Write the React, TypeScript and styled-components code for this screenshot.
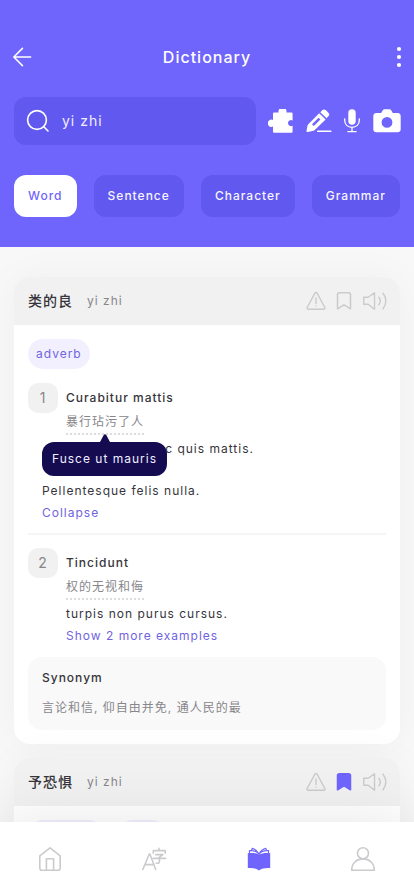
import React from "react";
import styled, { createGlobalStyle } from "styled-components";

const GlobalStyle = createGlobalStyle`
  *, *::before, *::after { box-sizing: border-box; }
  body {
    margin: 0;
    background: #f8f8f8;
    color: #36353b;
    font-family: Inter, "Noto Sans CJK SC", sans-serif;
    font-size: 12px;
    line-height: 22px;
    letter-spacing: 1px;
  }
  button, input { font: inherit; letter-spacing: inherit; color: inherit; }
  button { border: 0; padding: 0; margin: 0; background: none; cursor: pointer; }
  h1, h2, h3, p, ol { margin: 0; padding: 0; }
`;

const Screen = styled.div`
  display: flex;
  flex-direction: column;
  height: 100vh;
  overflow: hidden;
`;

const Header = styled.header`
  flex: none;
  display: flex;
  flex-direction: column;
  padding: 40px 14px 30px;
  background: #6f64fc;
  color: #fff;
`;

const TitleBar = styled.div`
  display: grid;
  grid-template-columns: 20px 1fr 20px;
  align-items: center;
  height: 34px;
  margin: 0 -2px 23px;
`;

const Title = styled.h1`
  text-align: center;
  font-size: 16px;
  font-weight: 500;
`;

const IconButton = styled.button<{ $color?: string; $align?: string }>`
  display: flex;
  justify-content: ${(p) => p.$align ?? "center"};
  color: ${(p) => p.$color ?? "inherit"};
  svg { display: block; }
`;

const SearchRow = styled.div`
  display: flex;
  align-items: center;
  gap: 12px;
  margin-bottom: 30px;
`;

const SearchField = styled.label`
  flex: 1;
  min-width: 0;
  display: flex;
  align-items: center;
  gap: 12px;
  height: 48px;
  padding: 0 12px;
  border-radius: 12px;
  background: #6158f0;
  svg { flex: none; }
`;

const SearchInput = styled.input`
  flex: 1;
  min-width: 0;
  border: 0;
  padding: 0;
  outline: none;
  background: transparent;
  font-size: 14px;
  color: #f1efff;
`;

const Tools = styled.div`
  display: flex;
  align-items: center;
  justify-content: space-between;
  width: 133px;
  margin-right: -1px;
`;

const Tabs = styled.div`
  display: flex;
  justify-content: space-between;
`;

const Tab = styled.button<{ $active?: boolean }>`
  height: 42px;
  padding: 0 14px;
  border-radius: 12px;
  font-weight: 500;
  white-space: nowrap;
  background: ${(p) => (p.$active ? "#fff" : "#6158f0")};
  color: ${(p) => (p.$active ? "#6f64fc" : "#f6f5ff")};
`;

const Results = styled.main`
  flex: 1;
  min-height: 0;
  overflow-y: auto;
  scrollbar-width: none;
  display: flex;
  flex-direction: column;
  gap: 14px;
  padding: 30px 14px 14px;
`;

const Card = styled.article`
  flex: none;
  border-radius: 16px;
  background: #fff;
  box-shadow: 0 0 40px rgba(0, 0, 0, 0.04);
`;

const CardHeader = styled.header`
  display: flex;
  align-items: center;
  gap: 14px;
  height: 48px;
  padding: 0 12px 0 14px;
  border-radius: 16px 16px 0 0;
  background: #f1f1f1;
`;

const Headword = styled.h2`
  font-size: 14px;
  font-weight: 500;
`;

const Pinyin = styled.span`
  flex: 1;
  color: #87868b;
`;

const CardActions = styled.div`
  display: flex;
  align-items: center;
  gap: 10px;
`;

const CardBody = styled.div`
  padding: 14px;
`;

const Tags = styled.div`
  display: flex;
  gap: 14px;
  margin-bottom: 14px;
`;

const Tag = styled.span`
  padding: 4px 8px;
  border-radius: 15px;
  background: #f2f0ff;
  color: #6f64e0;
`;

const Senses = styled.ol`
  list-style: none;
`;

const Sense = styled.li`
  display: grid;
  grid-template-columns: 30px 1fr;
  column-gap: 8px;
  & + & {
    margin-top: 9px;
    padding-top: 13px;
    border-top: 2px solid #f5f5f5;
  }
`;

const SenseNumber = styled.span`
  height: 30px;
  border-radius: 10px;
  background: #f1f1f1;
  color: #87868b;
  font-size: 14px;
  line-height: 30px;
  text-align: center;
`;

const SenseText = styled.div`
  display: flex;
  flex-direction: column;
  align-items: flex-start;
  padding-top: 4px;
`;

const SubHeading = styled.h3`
  font-size: 12px;
  font-weight: 500;
`;

const Glossed = styled.span`
  position: relative;
  margin-top: 4px;
  height: 22px;
  line-height: 18px;
  color: #87868b;
  margin-bottom: 3px;
  background: repeating-linear-gradient(90deg, #dcdcde 0 2px, transparent 2px 4px) bottom / 100% 2px no-repeat;
`;

const Tooltip = styled.span`
  position: absolute;
  z-index: 1;
  top: calc(100% + 7px);
  left: -24px;
  padding: 6px 10px;
  border-radius: 12px;
  background: #140b50;
  color: #f1efff;
  line-height: 22px;
  white-space: nowrap;
  svg {
    position: absolute;
    bottom: 100%;
    left: 50%;
    margin-left: -5px;
  }
`;

const Examples = styled.div<{ $wide?: boolean }>`
  grid-column: ${(p) => (p.$wide ? "1 / -1" : "2")};
  padding-left: ${(p) => (p.$wide ? "14px" : "0")};
`;

const Example = styled.p<{ $indent?: boolean }>`
  line-height: 21px;
  padding-left: ${(p) => (p.$indent ? "24px" : "0")};
  & + & { margin-top: 21px; }
`;

const LinkButton = styled.button`
  display: block;
  margin-top: 1px;
  color: #6f64e0;
`;

const Synonyms = styled.section`
  margin-top: 10px;
  padding: 10px 14px 11px;
  border-radius: 14px;
  background: #f9f9f9;
  p { margin-top: 8px; color: #87868b; }
`;

const BottomNav = styled.nav`
  position: relative;
  z-index: 2;
  flex: none;
  display: flex;
  justify-content: space-between;
  align-items: center;
  height: 74px;
  padding: 0 38px 0 37px;
  background: #fff;
  box-shadow: 0 0 60px rgba(0, 0, 0, 0.1);
`;

const stroke = {
  fill: "none",
  stroke: "currentColor",
  strokeLinecap: "round" as const,
  strokeLinejoin: "round" as const,
};

const BackIcon = () => (
  <svg width="22" height="22" viewBox="0 0 22 22" {...stroke} strokeWidth="1.7">
    <path d="M20.500 11H2M11.500 1.500L2 11L11.500 20.500" />
  </svg>
);

const MoreIcon = () => (
  <svg width="6" height="22" viewBox="0 0 6 22" fill="currentColor">
    <circle cx="3" cy="3" r="2.1" />
    <circle cx="3" cy="11" r="2.1" />
    <circle cx="3" cy="19" r="2.1" />
  </svg>
);

const SearchIcon = () => (
  <svg width="24" height="24" viewBox="0 0 24 24" {...stroke} strokeWidth="1.6">
    <circle cx="11" cy="11" r="9.4" />
    <path d="M17.8 17.8L22 22" />
  </svg>
);

const PuzzleIcon = () => (
  <svg width="26" height="24" viewBox="0 0 26 24" fill="currentColor">
    <path d="M6.300 3.500H10.600A4.050 4.050 0 1 1 18.400 3.500H23.300C24.100 3.500 24.600 4 24.600 4.800V11.400A3.100 3.100 0 1 0 24.600 16.800V22.400C24.600 23.200 24.100 23.700 23.300 23.700H6.300C5.500 23.700 5 23.200 5 22.400V17.600A3.650 3.650 0 1 1 5 11V4.800C5 4 5.500 3.500 6.300 3.500Z" />
  </svg>
);

const PencilIcon = () => (
  <svg width="26" height="24" viewBox="0 0 26 24" fill="currentColor">
    <path fillRule="evenodd" d="M13.200 4.300L19.600 10.400 8.500 21.200c-.6.5-1.200.8-2 .9L1.800 23c-.9.1-1.500-.4-1.300-1.300l.9-4.600c.2-.8.5-1.400 1.100-2zM12.600 8.700L6 15.300l1.800 1.700 6.600-6.500z" />
    <path d="M14.300 3.200L16.500 1.100c1-.9 2.200-.9 3.200 0l2.900 2.800c.9 1 .9 2.100 0 3.100l-2 2.200z" />
    <rect x="11" y="21.600" width="14.500" height="1.500" rx=".7" />
  </svg>
);

const MicIcon = () => (
  <svg width="18" height="24" viewBox="0 0 18 24" {...stroke} strokeWidth="1.300">
    <rect x="5.300" y=".3" width="7.400" height="15.400" rx="3.700" fill="currentColor" stroke="none" />
    <path d="M1.700 9.800v1.500c0 4.200 3 7 7.300 7s7.300-2.800 7.300-7V9.800M9 18.500v4M4.900 22.700h8.200" />
  </svg>
);

const CameraIcon = () => (
  <svg width="28" height="24" viewBox="0 0 28 24" fill="currentColor">
    <path fillRule="evenodd" d="M3.300 4h4.900l1.600-2.700C10.200.6 10.800.3 11.500.3h5c.7 0 1.300.3 1.700 1L19.800 4h4.900c1.700 0 3 1.300 3 3v13.300c0 1.700-1.300 3-3 3H3.300c-1.700 0-3-1.300-3-3V7c0-1.700 1.300-3 3-3zM14 8a5.400 5.400 0 1 0 0 10.800A5.400 5.400 0 0 0 14 8z" />
  </svg>
);

const WarningIcon = () => (
  <svg width="20" height="20" viewBox="0 0 20 20" {...stroke} strokeWidth="1.400">
    <path d="M8.900 2.200L1.200 16.500c-.5.900 0 1.700 1 1.700h15.600c1 0 1.500-.8 1-1.700L11.100 2.200c-.5-.9-1.700-.9-2.200 0z" />
    <path d="M10 7v5.500" />
    <circle cx="10" cy="15" r=".7" fill="currentColor" stroke="none" />
  </svg>
);

const BookmarkIcon = ({ filled }: { filled?: boolean }) => (
  <svg width="16" height="20" viewBox="0 0 16 20" {...stroke} fill={filled ? "currentColor" : "none"} strokeWidth="1.500">
    <path d="M3.400 1.700h9.200c1.100 0 1.900.7 1.900 1.800v14.300L8 13.800l-6.500 4V3.500c0-1.100.8-1.800 1.900-1.800z" />
  </svg>
);

const SpeakerIcon = () => (
  <svg width="26" height="20" viewBox="0 0 26 20" {...stroke} strokeWidth="1.400">
    <path d="M1.700 6.300h4.500L12.500 1.700v16.600l-6.300-5H1.700z" />
    <path d="M16.800 6.200c1.900 2.300 1.900 5.300 0 7.600M21 2.300c3.800 4.600 3.800 10.800 0 15.400" />
  </svg>
);

const HomeIcon = () => (
  <svg width="26" height="26" viewBox="0 0 26 26" {...stroke} strokeWidth="1.600">
    <path d="M2.800 9.800L13 1.800l10.200 8v12.100c0 1.300-1 2.300-2.300 2.300H5.100c-1.300 0-2.300-1-2.300-2.300z" />
    <path d="M9.400 24V12.800h7.200V24" />
  </svg>
);

const TranslateIcon = () => (
  <svg width="26" height="26" viewBox="0 0 26 26" {...stroke} strokeWidth="1.600">
    <path d="M1.800 23.500L8.300 8h.6l5.800 15.500M3.800 18.600h9" />
    <path d="M18 2.200v2.200M12.300 7.200V4.600h11.900v2.600M14.700 8.600h7.200L18.400 11.200v4.600c0 .9-.5 1.400-1.400 1.400h-1.800M12.200 12.400h12.300" />
  </svg>
);

const BookIcon = () => (
  <svg width="26" height="26" viewBox="0 0 26 26" {...stroke} strokeWidth="1.200">
    <path fill="currentColor" stroke="none" d="M1.800 7.200c4-.6 8-.3 11.200 1.300 3.200-1.600 7.200-1.900 11.200-1.300v14.900c-4.200-.5-7.800 0-11.200 2.300-3.400-2.300-7-2.800-11.200-2.300z" />
    <path d="M13 8C10.600 5.300 7 4.300 3.500 4.700v2.500M13 8C11.500 5 9.200 3.300 6.300 2.300L5.400 4.600M13 8c2.400-2.700 6-3.700 9.500-3.300v2.500M13 8c1.500-3 3.800-4.700 6.700-5.700l.9 2.300" />
  </svg>
);

const PersonIcon = () => (
  <svg width="26" height="26" viewBox="0 0 26 26" {...stroke} strokeWidth="1.600">
    <circle cx="13" cy="7.300" r="5.500" />
    <path d="M1.700 24.200C1.700 17.300 6.400 12.900 13 12.900s11.300 4.400 11.300 11.300z" />
  </svg>
);

const Entry = ({ word, saved, children }: { word: string; saved?: boolean; children: React.ReactNode }) => (
  <Card>
    <CardHeader>
      <Headword lang="zh">{word}</Headword>
      <Pinyin>yi zhi</Pinyin>
      <CardActions>
        <IconButton aria-label="Report" $color="#cbcbce"><WarningIcon /></IconButton>
        <IconButton aria-label="Bookmark" aria-pressed={!!saved} $color={saved ? "#6f64fc" : "#cbcbce"}>
          <BookmarkIcon filled={saved} />
        </IconButton>
        <IconButton aria-label="Listen" $color="#cbcbce"><SpeakerIcon /></IconButton>
      </CardActions>
    </CardHeader>
    <CardBody>{children}</CardBody>
  </Card>
);

export default function App() {
  return (
    <Screen>
      <GlobalStyle />
      <Header>
        <TitleBar>
          <IconButton aria-label="Back" $align="flex-start"><BackIcon /></IconButton>
          <Title>Dictionary</Title>
          <IconButton aria-label="More" $align="flex-end"><MoreIcon /></IconButton>
        </TitleBar>
        <SearchRow>
          <SearchField>
            <SearchIcon />
            <SearchInput aria-label="Search" defaultValue="yi zhi" />
          </SearchField>
          <Tools>
            <IconButton aria-label="Components"><PuzzleIcon /></IconButton>
            <IconButton aria-label="Draw"><PencilIcon /></IconButton>
            <IconButton aria-label="Speak"><MicIcon /></IconButton>
            <IconButton aria-label="Camera"><CameraIcon /></IconButton>
          </Tools>
        </SearchRow>
        <Tabs>
          <Tab $active aria-pressed>Word</Tab>
          <Tab>Sentence</Tab>
          <Tab>Character</Tab>
          <Tab>Grammar</Tab>
        </Tabs>
      </Header>

      <Results>
        <Entry word="类的良">
          <Tags><Tag>adverb</Tag></Tags>
          <Senses>
            <Sense>
              <SenseNumber>1</SenseNumber>
              <SenseText>
                <SubHeading>Curabitur mattis</SubHeading>
                <Glossed lang="zh">
                  暴行玷污了人
                  <Tooltip lang="la" role="tooltip">
                    <svg width="10" height="8" viewBox="0 0 10 8" fill="#140b50">
                      <path d="M0 8L3.600 1.200C4.200 0 5.800 0 6.400 1.200L10 8z" />
                    </svg>
                    Fusce ut mauris
                  </Tooltip>
                </Glossed>
              </SenseText>
              <Examples $wide>
                <Example $indent>Maecenas a nec quis mattis.</Example>
                <Example>Pellentesque felis nulla.</Example>
                <LinkButton>Collapse</LinkButton>
              </Examples>
            </Sense>
            <Sense>
              <SenseNumber>2</SenseNumber>
              <SenseText>
                <SubHeading>Tincidunt</SubHeading>
                <Glossed lang="zh">权的无视和侮</Glossed>
              </SenseText>
              <Examples>
                <Example>turpis non purus cursus.</Example>
                <LinkButton>Show 2 more examples</LinkButton>
              </Examples>
            </Sense>
          </Senses>
          <Synonyms>
            <SubHeading>Synonym</SubHeading>
            <p lang="zh">言论和信, 仰自由并免, 通人民的最</p>
          </Synonyms>
        </Entry>
        <Entry word="予恐惧" saved>
          <Tags>
            <Tag>adjective</Tag>
            <Tag>noun</Tag>
          </Tags>
        </Entry>
      </Results>

      <BottomNav aria-label="Main">
        <IconButton aria-label="Home" $color="#cbcbce"><HomeIcon /></IconButton>
        <IconButton aria-label="Translate" $color="#cbcbce"><TranslateIcon /></IconButton>
        <IconButton aria-label="Dictionary" aria-current="page" $color="#6f64fc"><BookIcon /></IconButton>
        <IconButton aria-label="Profile" $color="#cbcbce"><PersonIcon /></IconButton>
      </BottomNav>
    </Screen>
  );
}
